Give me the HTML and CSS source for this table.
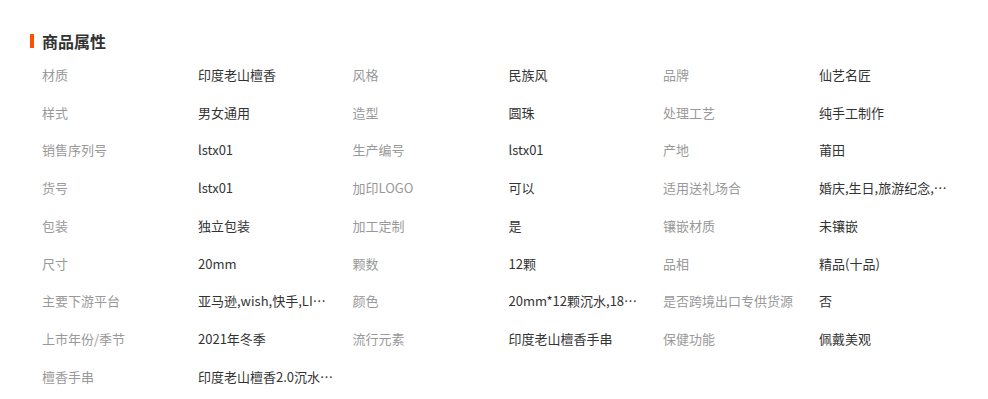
FILE: index.html
```html
<!DOCTYPE html>
<html lang="zh-CN">
<head>
<meta charset="utf-8">
<title>商品属性</title>
<link rel="stylesheet" href="styles.css">
</head>
<body>
<div class="panel">
  <h2 class="title"><span class="bar"></span>商品属性</h2>
  <div class="attrs">
    <div class="cell"><span class="label">材质</span><span class="value">印度老山檀香</span></div>
    <div class="cell"><span class="label">风格</span><span class="value">民族风</span></div>
    <div class="cell"><span class="label">品牌</span><span class="value">仙艺名匠</span></div>

    <div class="cell"><span class="label">样式</span><span class="value">男女通用</span></div>
    <div class="cell"><span class="label">造型</span><span class="value">圆珠</span></div>
    <div class="cell"><span class="label">处理工艺</span><span class="value">纯手工制作</span></div>

    <div class="cell"><span class="label">销售序列号</span><span class="value">lstx01</span></div>
    <div class="cell"><span class="label">生产编号</span><span class="value">lstx01</span></div>
    <div class="cell"><span class="label">产地</span><span class="value">莆田</span></div>

    <div class="cell"><span class="label">货号</span><span class="value">lstx01</span></div>
    <div class="cell"><span class="label">加印LOGO</span><span class="value">可以</span></div>
    <div class="cell"><span class="label">适用送礼场合</span><span class="value">婚庆,生日,旅游纪念,商务,节日</span></div>

    <div class="cell"><span class="label">包装</span><span class="value">独立包装</span></div>
    <div class="cell"><span class="label">加工定制</span><span class="value">是</span></div>
    <div class="cell"><span class="label">镶嵌材质</span><span class="value">未镶嵌</span></div>

    <div class="cell"><span class="label">尺寸</span><span class="value">20mm</span></div>
    <div class="cell"><span class="label">颗数</span><span class="value">12颗</span></div>
    <div class="cell"><span class="label">品相</span><span class="value">精品(十品)</span></div>

    <div class="cell"><span class="label">主要下游平台</span><span class="value">亚马逊,wish,快手,LINE,eBay</span></div>
    <div class="cell"><span class="label">颜色</span><span class="value">20mm*12颗沉水,18颗沉水</span></div>
    <div class="cell"><span class="label">是否跨境出口专供货源</span><span class="value">否</span></div>

    <div class="cell"><span class="label">上市年份/季节</span><span class="value">2021年冬季</span></div>
    <div class="cell"><span class="label">流行元素</span><span class="value">印度老山檀香手串</span></div>
    <div class="cell"><span class="label">保健功能</span><span class="value">佩戴美观</span></div>

    <div class="cell"><span class="label">檀香手串</span><span class="value">印度老山檀香2.0沉水手串</span></div>
  </div>
</div>
</body>
</html>
```

FILE: styles.css
```css
html, body {
  margin: 0;
  padding: 0;
  background: #ffffff;
}

body {
  font-family: "Noto Sans CJK SC", "Noto Sans", "Liberation Sans", sans-serif;
  font-size: 13px;
  color: #333333;
}

.panel {
  padding: 30px 0 0 30px;
}

.title {
  display: flex;
  align-items: center;
  gap: 8px;
  margin: 0;
  height: 22px;
  font-size: 16px;
  line-height: 22px;
  font-weight: 700;
  color: #333333;
}

.bar {
  display: block;
  width: 4px;
  height: 14px;
  background: #ff5000;
}

.attrs {
  display: grid;
  grid-template-columns: repeat(3, 310.5px);
  grid-auto-rows: 37.75px;
  margin-top: 4px;
  padding-left: 12px;
}

.cell {
  display: flex;
  align-items: center;
  min-width: 0;
}

.label {
  flex: 0 0 156px;
  width: 156px;
  color: #999999;
  white-space: nowrap;
  overflow: hidden;
  line-height: 20px;
}

.value {
  max-width: 137px;
  color: #333333;
  white-space: nowrap;
  overflow: hidden;
  text-overflow: ellipsis;
  line-height: 20px;
}
```
